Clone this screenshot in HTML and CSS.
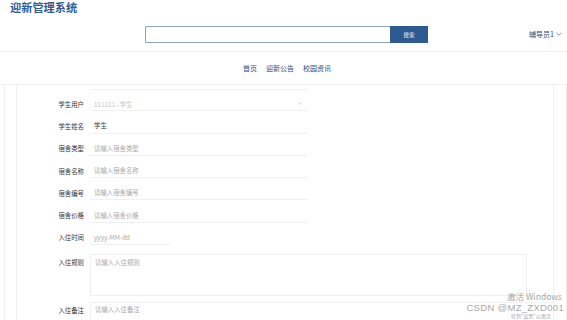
FILE: index.html
```html
<html>
	<head>
		<link rel="stylesheet" href="styles.css">
	</head>
	<body>
		<header class="top">
			<div class="logo">迎新管理系统</div>
			<div class="searchbar">
				<div class="search">
					<input class="search-input" type="text">
					<button class="search-btn">搜索</button>
				</div>
				<div class="user">辅导员1
					<svg class="caret" width="6" height="4" viewBox="0 0 6 4"><path d="M0.5 0.8 L3 3.2 L5.5 0.8" fill="none" stroke="#777" stroke-width="0.8"/></svg>
				</div>
			</div>
		</header>
		<nav class="menu">
			<a href="#">首页</a>
			<a href="#">迎新公告</a>
			<a href="#">校园资讯</a>
		</nav>
		<div class="outer">
			<div class="panel">
				<div class="form">
					<div class="row">
						<label>学生用户</label>
						<div class="field select disabled">111111--学生
							<svg class="arrow" width="5" height="3" viewBox="0 0 6 4"><path d="M0.5 0.8 L3 3.2 L5.5 0.8" fill="none" stroke="#bbb" stroke-width="0.8"/></svg>
						</div>
					</div>
					<div class="row">
						<label>学生姓名</label>
						<div class="field value">学生</div>
					</div>
					<div class="row">
						<label>宿舍类型</label>
						<div class="field">请输入宿舍类型</div>
					</div>
					<div class="row">
						<label>宿舍名称</label>
						<div class="field">请输入宿舍名称</div>
					</div>
					<div class="row">
						<label>宿舍编号</label>
						<div class="field">请输入宿舍编号</div>
					</div>
					<div class="row">
						<label>宿舍价格</label>
						<div class="field">请输入宿舍价格</div>
					</div>
					<div class="row">
						<label>入住时间</label>
						<div class="field date">yyyy-MM-dd</div>
					</div>
					<div class="row area-row">
						<label>入住规则</label>
						<div class="area">请输入入住规则</div>
					</div>
					<div class="row last-row">
						<label>入住备注</label>
						<div class="box">请输入入住备注</div>
					</div>
				</div>
			</div>
		</div>
		<div class="mark">CSDN @MZ_ZXD001</div>
		<div class="activate">激活 Windows</div>
		<div class="activate-sub">转到"设置"以激活</div>
	</body>
</html>
```

FILE: styles.css
```css
body{
	margin: 0;
	font-family: "Noto Sans CJK SC", "Noto Sans", sans-serif;
	color: #333;
	background: #fff;
	overflow: hidden;
	height: 320px;
}
.top{
	height: 52px;
	border-bottom: 1px solid #eee;
	box-sizing: border-box;
}
.logo{
	padding: 0 0 0 10px;
	font-size: 11.2px;
	font-weight: bold;
	color: #2f5b93;
	line-height: 14px;
}
.searchbar{
	position: relative;
	display: flex;
	justify-content: center;
	margin-top: 12px;
	padding-left: 6px;
}
.search{
	display: flex;
	height: 17px;
}
.search-input{
	width: 245px;
	height: 17px;
	box-sizing: border-box;
	border: 1px solid #8ea2be;
	border-right: none;
	border-radius: 2px 0 0 2px;
	outline: none;
}
.search-btn{
	width: 38px;
	height: 17px;
	border: none;
	background: #2d5a92;
	color: #fff;
	font-size: 5.5px;
	font-family: "Noto Sans CJK SC", sans-serif;
	padding: 0;
}
.user{
	position: absolute;
	right: 5px;
	top: 3px;
	font-size: 7px;
	color: #2f4a70;
	display: flex;
	align-items: center;
	gap: 2px;
}
.menu{
	height: 33px;
	display: flex;
	justify-content: center;
	align-items: center;
	gap: 9px;
	padding-left: 7px;
	border-bottom: 1px solid #f2f2f2;
	box-sizing: border-box;
}
.menu a{
	font-size: 7px;
	color: #2b4f80;
	text-decoration: none;
}
.outer{
	margin-left: 4px;
	border-left: 1px solid #eee;
	border-right: 1px solid #eee;
	height: 240px;
	padding-left: 11px;
	box-sizing: border-box;
	width: 563px;
}
.panel{
	border-left: 1px solid #f0f0f0;
	border-right: 1px solid #f0f0f0;
	width: 538px;
	height: 100%;
	box-sizing: border-box;
	padding-top: 4px;
}
.form{
	display: flex;
	flex-direction: column;
}
.row{
	display: flex;
	align-items: center;
	height: 22.3px;
}
.row label{
	width: 73px;
	text-align: right;
	font-size: 6.4px;
	color: #333;
	padding: 8px 6px 0 0;
	box-sizing: border-box;
	flex-shrink: 0;
}
.field{
	width: 218px;
	height: 100%;
	border-bottom: 1px solid #eef0f3;
	box-sizing: border-box;
	display: flex;
	align-items: center;
	padding: 8px 0 0 4px;
	font-size: 6.4px;
	color: #aaa;
	position: relative;
}
.select{
	border-top: 1px solid #eef0f3;
}
.disabled{
	color: #c4c4c4;
}
.arrow{
	position: absolute;
	right: 5px;
	top: 12px;
}
.value{
	color: #333;
}
.date{
	width: 80px;
}
.area-row{
	height: auto;
	align-items: flex-start;
	margin-top: 9px;
}
.area-row label{
	padding-top: 4px;
}
.area{
	width: 437px;
	height: 42px;
	border: 1px solid #eef0f3;
	box-sizing: border-box;
	padding: 3px 4px;
	font-size: 6.4px;
	color: #aaa;
}
.last-row{
	margin-top: 6px;
	height: 20px;
	align-items: flex-start;
}
.last-row label{
	padding-top: 4px;
}
.box{
	width: 463px;
	height: 20px;
	border: 1px solid #eef0f3;
	border-right: none;
	box-sizing: border-box;
	padding: 2px 4px;
	font-size: 6.4px;
	color: #aaa;
}
.mark{
	position: absolute;
	right: 3px;
	top: 302px;
	font-family: "Liberation Sans", sans-serif;
	font-size: 9.5px;
	line-height: 11px;
	color: #a8a8a8;
	letter-spacing: 0.3px;
}
.activate{
	position: absolute;
	left: 507px;
	top: 291px;
	font-family: "Noto Sans CJK SC", sans-serif;
	font-size: 8.5px;
	line-height: 10px;
	color: rgba(120,120,120,0.7);
	white-space: nowrap;
}
.activate-sub{
	position: absolute;
	left: 511px;
	top: 313px;
	font-size: 5px;
	line-height: 6px;
	color: rgba(120,120,120,0.7);
	white-space: nowrap;
}
```
